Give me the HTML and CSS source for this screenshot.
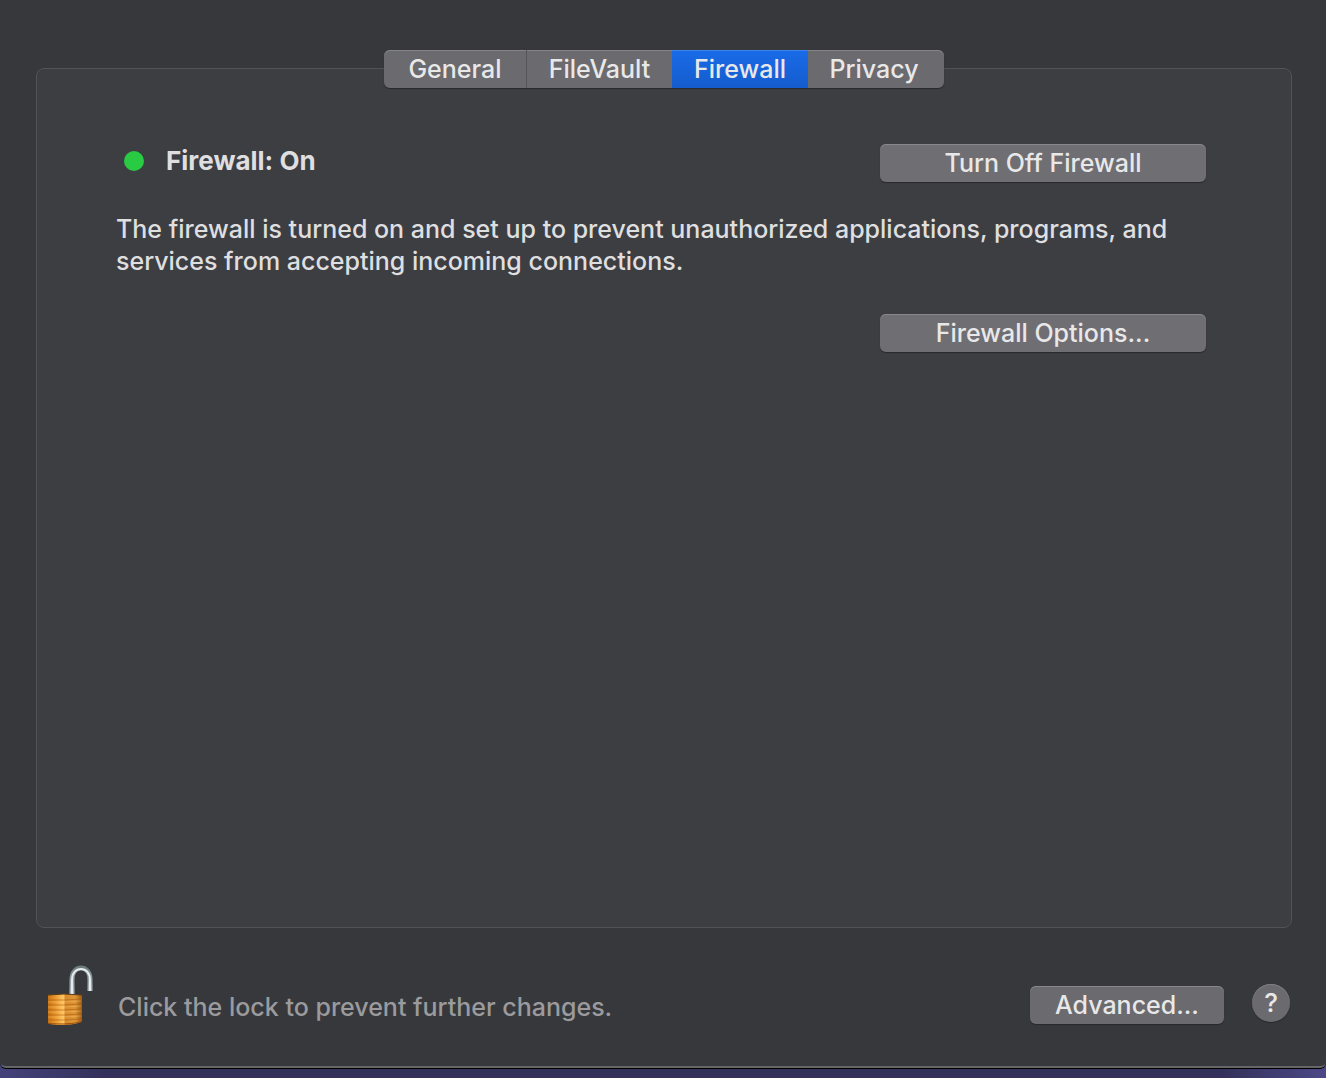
FILE: index.html
```html
<!DOCTYPE html>
<html lang="en">
<head>
<meta charset="utf-8">
<meta name="viewport" content="width=device-width, initial-scale=1">
<title>Security &amp; Privacy</title>
<link rel="stylesheet" href="styles.css">
</head>
<body>
<main class="window">
  <nav class="tabs" aria-label="Sections">
    <button class="tab" type="button">General</button>
    <button class="tab tab-divided" type="button">FileVault</button>
    <button class="tab tab-selected" type="button" aria-current="page">Firewall</button>
    <button class="tab" type="button">Privacy</button>
  </nav>
  <section class="panel">
    <header class="status">
      <span class="status-dot"></span>
      <h1 class="status-title">Firewall: On</h1>
      <button class="button button-wide" type="button">Turn Off Firewall</button>
    </header>
    <p class="description">The firewall is turned on and set up to prevent unauthorized applications, programs, and services from accepting incoming connections.</p>
    <div class="actions">
      <button class="button button-wide" type="button">Firewall Options...</button>
    </div>
  </section>
  <footer class="footer">
    <button class="lock" type="button" aria-label="Lock">
      <svg width="48" height="62" viewBox="0 0 48 62" aria-hidden="true">
        <defs>
          <linearGradient id="brass" x1="0" x2="1" y1="0" y2="0">
            <stop offset="0" stop-color="#c87314"/>
            <stop offset=".2" stop-color="#e6942b"/>
            <stop offset=".4" stop-color="#fbbd58"/>
            <stop offset=".47" stop-color="#ffc661"/>
            <stop offset=".5" stop-color="#d98a2c"/>
            <stop offset=".8" stop-color="#dd9636"/>
            <stop offset="1" stop-color="#a3590f"/>
          </linearGradient>
          <linearGradient id="steel" x1="0" x2="0" y1="0" y2="1">
            <stop offset="0" stop-color="#6f7b7d"/>
            <stop offset=".35" stop-color="#8f9b9e"/>
            <stop offset="1" stop-color="#b3bdc1"/>
          </linearGradient>
        </defs>
        <path d="M26 31V16C26 8 30 4 35 4s9 4 9 12v11" fill="none" stroke="url(#steel)" stroke-width="5"/>
        <path d="M26 31V16C26 9 30 5 35 5s9 4 9 11v11" fill="none" stroke="#e4ecef" stroke-width="2"/>
        <path d="M2 31l16-1 18 1v26q-2 3-18 4Q3 61 2 59z" fill="url(#brass)"/>
        <path d="M2 36h16l18-1M2 41h16l18-1M2 46h16l18-1M2 51h16l18-1M2 56h16l18-1" fill="none" stroke="#a85a10" stroke-opacity=".55" stroke-width="1"/>
        <path d="M2 38h15l18-1M2 43h15l18-1M2 48h15l18-1M2 53h15l18-1" fill="none" stroke="#ffd27c" stroke-opacity=".35" stroke-width="1"/>
        <path d="M2 31l16-1 18 1" fill="none" stroke="#5b3a18" stroke-width="1"/>
        <path d="M2 59q1 1 16 1 17-1 18-3" fill="none" stroke="#9b4d0b" stroke-width="1"/>
      </svg>
    </button>
    <p class="hint">Click the lock to prevent further changes.</p>
    <button class="button button-advanced" type="button">Advanced...</button>
    <button class="help" type="button" aria-label="Help">?</button>
  </footer>
</main>
</body>
</html>
```
FILE: styles.css
```css
* {
  box-sizing: border-box;
}

body {
  display: flex;
  flex-direction: column;
  min-height: 100vh;
  margin: 0;
  padding-bottom: 10px;
  background: linear-gradient(90deg, #44427a, #33315a 8%, #33315a 92%, #4c4886);
  color: #dfdfe0;
  font-family: Inter, "Liberation Sans", sans-serif;
  font-size: 25px;
  font-weight: 500;
  line-height: 32px;
}

h1,
p {
  margin: 0;
}

button {
  margin: 0;
  border: 0;
  color: #e8e8e9;
  font: inherit;
}

.window {
  display: flex;
  flex: 1;
  flex-direction: column;
  padding: 50px 34px 40px 36px;
  border-bottom: 2px solid #666669;
  border-radius: 0 0 6px 6px;
  background: #37383c;
  box-shadow: 0 1px 0 #000;
}

.tabs {
  z-index: 1;
  display: flex;
  align-self: center;
  margin-bottom: -20px;
  border-radius: 6px;
  box-shadow: 0 1px 1px #27282b;
}

.tab {
  width: 136px;
  height: 38px;
  padding: 0;
  background: #6b6a6e;
  box-shadow: inset 0 1px 0 #858488;
}

.tab:first-child {
  width: 143px;
  border-right: 1px solid #55555a;
  border-radius: 6px 0 0 6px;
}

.tab:last-child {
  padding-right: 4px;
  border-radius: 0 6px 6px 0;
}

.tab-divided {
  width: 145px;
}

.tab-selected {
  background: linear-gradient(#1a6be8, #145ccd);
  box-shadow: inset 0 1px 0 #3d83ed;
}

.panel {
  flex: 1;
  padding: 75px 85px 40px 79px;
  border: 1px solid #515256;
  border-radius: 8px;
  background: #3d3e42;
}

.status {
  display: flex;
  align-items: center;
}

.status-dot {
  width: 20px;
  height: 20px;
  margin: 0 22px 4px 8px;
  border-radius: 50%;
  background: #28cb42;
}

.status-title {
  flex: 1;
  padding-bottom: 4px;
  font-size: 26px;
  font-weight: 750;
}

.button {
  height: 38px;
  padding: 0 24px;
  border-radius: 6px;
  background: #6f6e73;
  box-shadow: inset 0 1px 0 #88878b, 0 1px 1px #28292c;
}

.button-wide {
  width: 326px;
}

.description {
  margin-top: 31px;
  font-weight: 550;
}

.actions {
  display: flex;
  justify-content: flex-end;
  margin-top: 37px;
}

.footer {
  display: flex;
  align-items: flex-end;
  padding: 36px 2px 0 10px;
}

.lock {
  display: flex;
  padding: 0;
  background: none;
}

.hint {
  flex: 1;
  padding: 0 24px 3px;
  color: #9b9b9e;
  font-weight: 550;
}

.button-advanced {
  width: 194px;
  margin: 0 28px 2px 0;
  background: #6b6a6e;
}

.help {
  width: 38px;
  height: 38px;
  margin-bottom: 4px;
  padding: 0;
  border-radius: 50%;
  background: #6b6a6e;
  box-shadow: inset 0 1px 0 #7f7e82, 0 1px 1px #28292c;
  font-size: 26px;
}
```
